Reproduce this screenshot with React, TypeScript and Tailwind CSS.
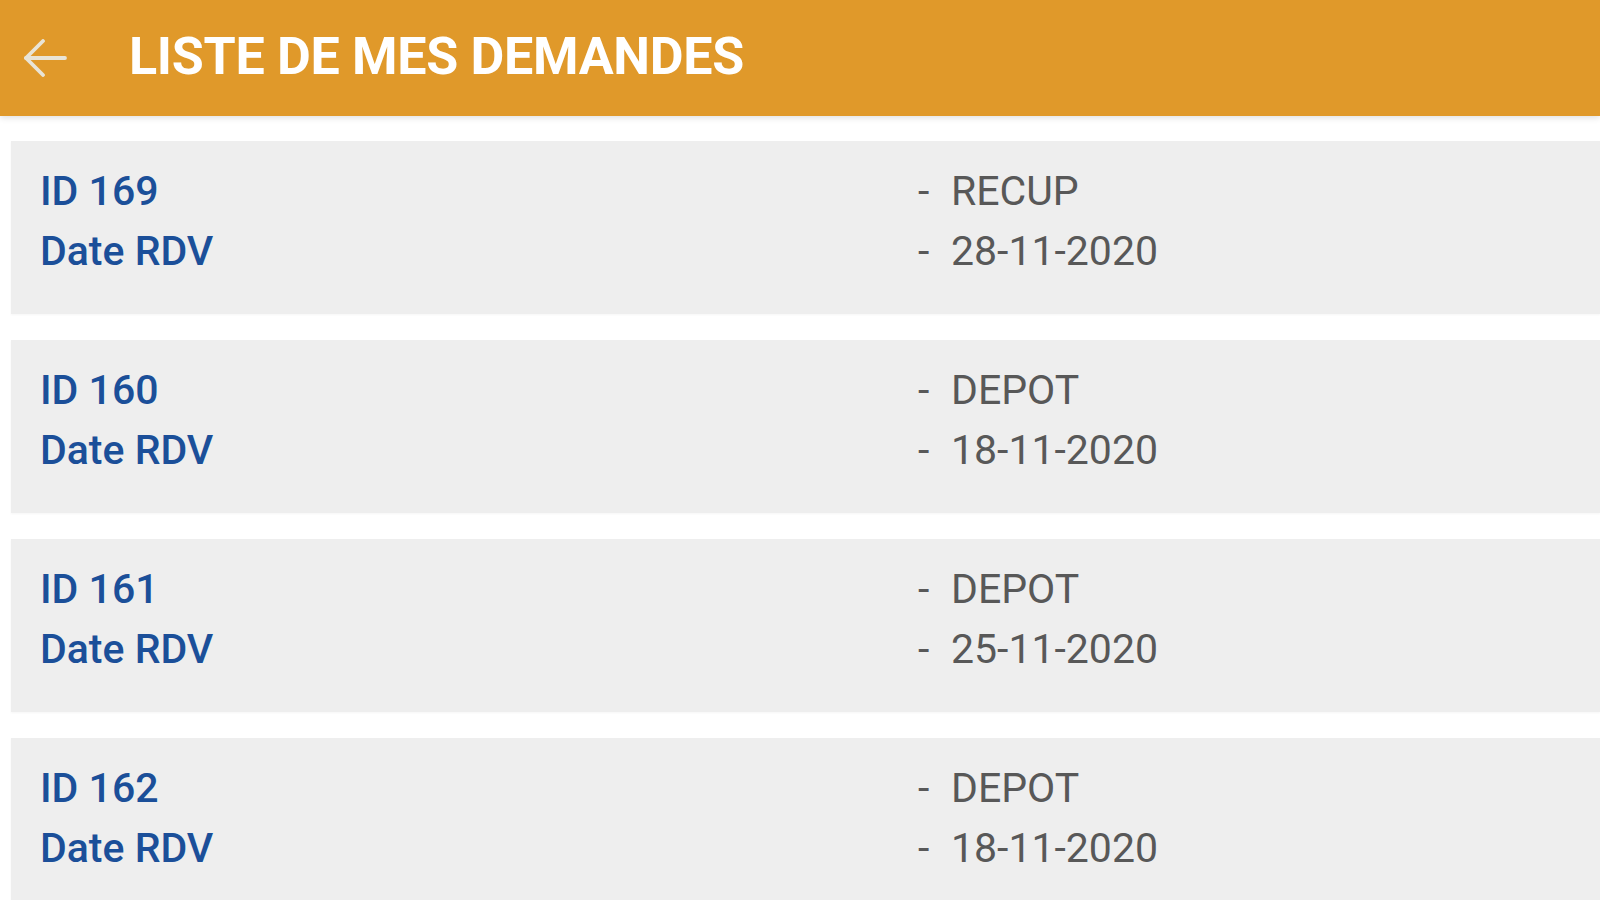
import React from 'react';

interface Demande {
  id: number;
  type: string;
  date: string;
}

const demandes: Demande[] = [
  { id: 169, type: 'RECUP', date: '28-11-2020' },
  { id: 160, type: 'DEPOT', date: '18-11-2020' },
  { id: 161, type: 'DEPOT', date: '25-11-2020' },
  { id: 162, type: 'DEPOT', date: '18-11-2020' },
];

function BackArrow() {
  return (
    <svg width="44" height="38" viewBox="0 0 44 38" fill="none" className="shrink-0">
      <path d="M42 19H3" stroke="#E9E4D6" strokeWidth="3.8" strokeLinecap="round" />
      <path d="M20 2L3 19L20 36" stroke="#E9E4D6" strokeWidth="3.8" strokeLinecap="round" strokeLinejoin="round" />
    </svg>
  );
}

function DemandeCard({ demande }: { demande: Demande }) {
  return (
    <div className="bg-[#eeeeee] ml-[11px] h-[173px] pt-[20px] pl-[29px] grid grid-cols-[878px_1fr] shadow-[0_1px_2px_rgba(0,0,0,0.04)]">
      <div className="text-[41px] leading-[60px] font-medium text-[#1b4f99]">
        <div>ID {demande.id}</div>
        <div>Date RDV</div>
      </div>
      <div className="text-[41px] leading-[60px] text-[#585858]">
        <div className="flex">
          <span className="w-[33px]">-</span>
          <span>{demande.type}</span>
        </div>
        <div className="flex">
          <span className="w-[33px]">-</span>
          <span>{demande.date}</span>
        </div>
      </div>
    </div>
  );
}

export default function App() {
  return (
    <div className="w-[1600px] h-[900px] overflow-hidden bg-white" style={{ fontFamily: 'Roboto, "Noto Sans", sans-serif' }}>
      {/* Header */}
      <div className="relative z-10 h-[116px] bg-[#e0992a] flex items-center pl-[23px] shadow-[0_2px_6px_rgba(0,0,0,0.12)]">
        <BackArrow />
        <h1 className="ml-[62px] text-white font-bold text-[52px] leading-none tracking-[-0.3px] pb-[2px]">
          LISTE DE MES DEMANDES
        </h1>
      </div>

      {/* List */}
      <div className="pt-[25px] flex flex-col gap-[26px]">
        {demandes.map((d) => (
          <DemandeCard key={d.id} demande={d} />
        ))}
      </div>
    </div>
  );
}
